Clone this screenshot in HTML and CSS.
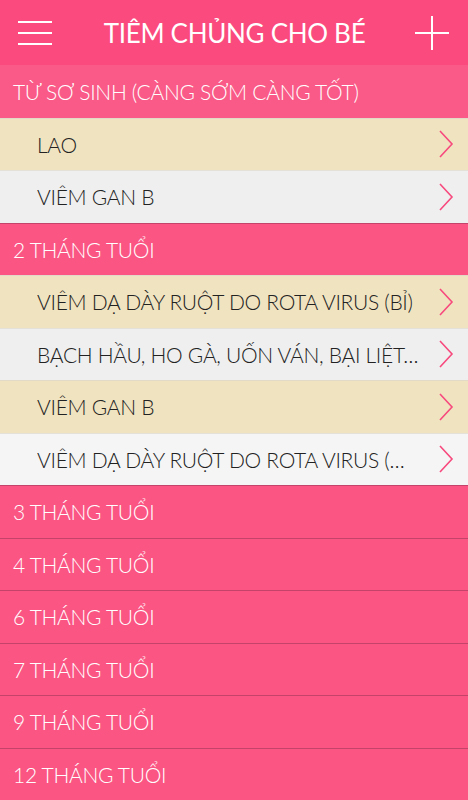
FILE: index.html
```html
<!DOCTYPE html>
<html lang="vi">
  <head>
    <meta charset="UTF-8" />
    <meta name="viewport" content="width=device-width, initial-scale=1.0" />
    <title>Tiêm chủng cho bé</title>
    <link rel="stylesheet" href="styles.css">
  </head>
  <body>
    <div class="man_hinh">
      <div class="thanh_tieu_de">
        <svg class="nut_menu" width="36" height="26" viewBox="0 0 36 26">
          <path d="M1 2H35M1 13H35M1 24H35" stroke="#fff" stroke-width="2" fill="none" />
        </svg>
        <div class="tieu_de">TIÊM CHỦNG CHO BÉ</div>
        <svg class="nut_them" width="36" height="36" viewBox="0 0 36 36">
          <path d="M18 1V35M1 18H35" stroke="#fff" stroke-width="2" fill="none" />
        </svg>
      </div>

      <div class="nhom nhom_mo">TỪ SƠ SINH (CÀNG SỚM CÀNG TỐT)</div>
      <div class="mui_tiem vang">
        <span class="ten_vacxin">LAO</span>
        <svg class="mui_ten" width="16" height="28" viewBox="0 0 16 28"><path d="M2 1L14 14L2 27" /></svg>
      </div>
      <div class="mui_tiem xam">
        <span class="ten_vacxin">VIÊM GAN B</span>
        <svg class="mui_ten" width="16" height="28" viewBox="0 0 16 28"><path d="M2 1L14 14L2 27" /></svg>
      </div>

      <div class="nhom">2 THÁNG TUỔI</div>
      <div class="mui_tiem vang">
        <span class="ten_vacxin">VIÊM DẠ DÀY RUỘT DO ROTA VIRUS (BỈ)</span>
        <svg class="mui_ten" width="16" height="28" viewBox="0 0 16 28"><path d="M2 1L14 14L2 27" /></svg>
      </div>
      <div class="mui_tiem xam">
        <span class="ten_vacxin">BẠCH HẦU, HO GÀ, UỐN VÁN, BẠI LIỆT, HIB</span>
        <svg class="mui_ten" width="16" height="28" viewBox="0 0 16 28"><path d="M2 1L14 14L2 27" /></svg>
      </div>
      <div class="mui_tiem vang">
        <span class="ten_vacxin">VIÊM GAN B</span>
        <svg class="mui_ten" width="16" height="28" viewBox="0 0 16 28"><path d="M2 1L14 14L2 27" /></svg>
      </div>
      <div class="mui_tiem xam nhat">
        <span class="ten_vacxin">VIÊM DẠ DÀY RUỘT DO ROTA VIRUS (MỸ)</span>
        <svg class="mui_ten" width="16" height="28" viewBox="0 0 16 28"><path d="M2 1L14 14L2 27" /></svg>
      </div>

      <div class="nhom">3 THÁNG TUỔI</div>
      <div class="nhom">4 THÁNG TUỔI</div>
      <div class="nhom">6 THÁNG TUỔI</div>
      <div class="nhom">7 THÁNG TUỔI</div>
      <div class="nhom">9 THÁNG TUỔI</div>
      <div class="nhom">12 THÁNG TUỔI</div>
    </div>
  </body>
</html>
```
FILE: styles.css
```css
* {
  box-sizing: border-box;
  padding: 0;
  margin: 0;
}
body {
  font-family: Lato, "Open Sans", sans-serif;
  font-weight: 300;
  background-color: #fb5584;
  overflow: hidden;
}
.man_hinh {
  width: 468px;
  height: 800px;
  display: flex;
  flex-direction: column;
}
.thanh_tieu_de {
  height: 65px;
  flex-shrink: 0;
  background-color: #fb4a7d;
  display: flex;
  align-items: center;
  padding: 0 18px 0 17px;
}
.thanh_tieu_de .nut_menu {
  display: block;
  margin-top: 1px;
}
.thanh_tieu_de .tieu_de {
  flex: 1;
  text-align: center;
  color: #fff;
  font-size: 26px;
  font-weight: 400;
  letter-spacing: -0.3px;
  padding-left: 2px;
}
.thanh_tieu_de .nut_them {
  display: block;
}
.nhom {
  height: 52.5px;
  flex-shrink: 0;
  display: flex;
  align-items: center;
  padding-left: 13px;
  background-color: #fb5584;
  color: #fff;
  font-size: 21px;
  letter-spacing: -0.3px;
  border-top: 1px solid #c4436a;
}
.nhom_mo {
  border-top: none;
  background-color: #fa5a87;
}
.mui_tiem {
  height: 52.5px;
  flex-shrink: 0;
  display: flex;
  align-items: center;
  padding: 0 14px 0 37px;
  color: #222;
  font-size: 21px;
  letter-spacing: -0.3px;
  border-top: 1px solid #e2d9c6;
}
.mui_tiem.vang {
  background-color: #f0e3c0;
}
.mui_tiem.xam {
  background-color: #efefef;
  border-top-color: #e4e1d8;
}
.mui_tiem.nhat {
  background-color: #f5f5f5;
}
.mui_tiem .ten_vacxin {
  flex: 1;
  white-space: nowrap;
  overflow: hidden;
  text-overflow: ellipsis;
  padding-right: 16px;
}
.mui_tiem .mui_ten {
  flex-shrink: 0;
  display: block;
}
.mui_tiem .mui_ten path {
  stroke: #f7497d;
  stroke-width: 1.6;
  fill: none;
}
```
